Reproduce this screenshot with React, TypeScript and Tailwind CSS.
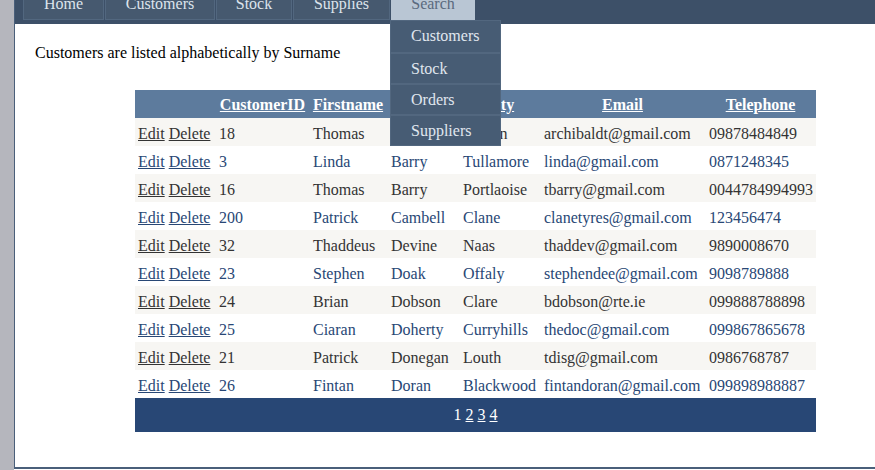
import React from "react";

type Customer = {
  id: string;
  first: string;
  last: string;
  city: string;
  email: string;
  phone: string;
};

const customers: Customer[] = [
  { id: "18", first: "Thomas", last: "Archibald", city: "Athlon", email: "archibaldt@gmail.com", phone: "09878484849" },
  { id: "3", first: "Linda", last: "Barry", city: "Tullamore", email: "linda@gmail.com", phone: "0871248345" },
  { id: "16", first: "Thomas", last: "Barry", city: "Portlaoise", email: "tbarry@gmail.com", phone: "0044784994993" },
  { id: "200", first: "Patrick", last: "Cambell", city: "Clane", email: "clanetyres@gmail.com", phone: "123456474" },
  { id: "32", first: "Thaddeus", last: "Devine", city: "Naas", email: "thaddev@gmail.com", phone: "9890008670" },
  { id: "23", first: "Stephen", last: "Doak", city: "Offaly", email: "stephendee@gmail.com", phone: "9098789888" },
  { id: "24", first: "Brian", last: "Dobson", city: "Clare", email: "bdobson@rte.ie", phone: "099888788898" },
  { id: "25", first: "Ciaran", last: "Doherty", city: "Curryhills", email: "thedoc@gmail.com", phone: "099867865678" },
  { id: "21", first: "Patrick", last: "Donegan", city: "Louth", email: "tdisg@gmail.com", phone: "0986768787" },
  { id: "26", first: "Fintan", last: "Doran", city: "Blackwood", email: "fintandoran@gmail.com", phone: "099898988887" },
];

const navItems = [
  { label: "Home", w: "w-[81px]" },
  { label: "Customers", w: "w-[110px]" },
  { label: "Stock", w: "w-[76px]" },
  { label: "Supplies", w: "w-[97px]" },
];

const searchMenu = ["Customers", "Stock", "Orders", "Suppliers"];

// Nav item box
const NavItem = ({ label, w }: { label: string; w: string }) => (
  <div
    className={`${w} h-[20px] flex justify-center bg-[#46596f] border-x border-b border-[#52677f] text-[#dde4ec]`}
  >
    <span className="-mt-[5px] leading-[18px]">{label}</span>
  </div>
);

export default function App() {
  return (
    <div className="w-[875px] h-[470px] overflow-hidden flex bg-white font-['Liberation_Serif',serif] text-[16px]">
      {/* ── Left gray strip ── */}
      <div className="w-[14px] h-full shrink-0 bg-[#b5b6bd]" />

      {/* ── Page frame ── */}
      <div className="flex-1 h-[469px] border-l border-b-2 border-[#4a5f7a] flex flex-col">
        {/* Nav bar */}
        <div className="h-[24px] shrink-0 bg-[#3d5068] flex items-start gap-px pl-[8px]">
          {navItems.map((n) => (
            <NavItem key={n.label} label={n.label} w={n.w} />
          ))}
          <div className="relative w-[84px] h-[20px] flex justify-center bg-[#b9c6d4] text-[#5a6a7e]">
            <span className="-mt-[5px] leading-[18px]">Search</span>

            {/* Dropdown */}
            <div className="absolute left-[-1px] top-[20px] z-10 w-[111px] bg-[#475c74] border border-[#52677f] flex flex-col">
              {searchMenu.map((m, i) => (
                <div
                  key={m}
                  className={`h-[31px] flex items-center pl-[20px] text-[#e0e7ef] ${
                    i > 0 ? "border-t-2 border-[#52677f]" : "pb-[1px]"
                  }`}
                >
                  {m}
                </div>
              ))}
            </div>
          </div>
        </div>

        {/* Content */}
        <div className="pl-[20px] pt-[20px]">
          <p className="leading-[18px] text-black">
            Customers are listed alphabetically by Surname
          </p>

          <table className="mt-[28px] ml-[100px] w-[681px] border-collapse table-fixed">
            <colgroup>
              <col className="w-[81px]" />
              <col className="w-[93px]" />
              <col className="w-[78px]" />
              <col className="w-[72px]" />
              <col className="w-[81px]" />
              <col className="w-[165px]" />
              <col className="w-[111px]" />
            </colgroup>
            <thead>
              <tr className="h-[28px] bg-[#5d7b9d] text-white font-bold leading-[18px]">
                <th />
                <th className="px-[3px] pt-[2px] text-center">
                  <span className="underline">CustomerID</span>
                </th>
                <th className="px-[3px] pt-[2px] text-center">
                  <span className="underline">Firstname</span>
                </th>
                <th className="px-[3px] pt-[2px] text-center">
                  <span className="underline">Surname</span>
                </th>
                <th className="px-[3px] pt-[2px] text-center">
                  <span className="underline">City</span>
                </th>
                <th className="px-[3px] pt-[2px] text-center">
                  <span className="underline">Email</span>
                </th>
                <th className="px-[3px] pt-[2px] text-center">
                  <span className="underline">Telephone</span>
                </th>
              </tr>
            </thead>
            <tbody>
              {customers.map((c, i) => (
                <tr
                  key={c.id}
                  className={`h-[28px] leading-[18px] whitespace-nowrap ${
                    i % 2 === 0 ? "bg-[#f7f6f3] text-[#333333]" : "bg-white text-[#284775]"
                  }`}
                >
                  <td className="pl-[3px] pt-[4px]">
                    <span className="underline">Edit</span>{" "}
                    <span className="underline">Delete</span>
                  </td>
                  <td className="pl-[3px] pt-[4px]">{c.id}</td>
                  <td className="pl-[4px] pt-[4px]">{c.first}</td>
                  <td className="pl-[4px] pt-[4px]">{c.last}</td>
                  <td className="pl-[4px] pt-[4px]">{c.city}</td>
                  <td className="pl-[4px] pt-[4px]">{c.email}</td>
                  <td className="pl-[4px] pt-[4px]">{c.phone}</td>
                </tr>
              ))}
              <tr className="h-[34px] bg-[#284775] text-white">
                <td colSpan={7} className="text-center">
                  <span>1</span> <span className="underline">2</span>{" "}
                  <span className="underline">3</span>{" "}
                  <span className="underline">4</span>
                </td>
              </tr>
            </tbody>
          </table>
        </div>
      </div>
    </div>
  );
}
